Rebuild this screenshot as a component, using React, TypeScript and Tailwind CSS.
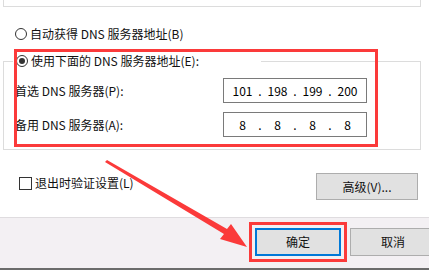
import React from 'react';

const font = "font-['Noto_Sans_CJK_SC',sans-serif]";

const Radio = ({ checked }: { checked?: boolean }) => (
  <span className="w-[12px] h-[12px] rounded-full border border-[#333] bg-white flex items-center justify-center shrink-0">
    {checked && <span className="w-[6px] h-[6px] rounded-full bg-[#333]" />}
  </span>
);

const IpField = ({ parts }: { parts: string[] }) => (
  <div className="w-[144px] h-[25px] border border-[#7a7a7a] bg-white flex items-center pl-[4px] text-[12px] leading-[16px] text-black">
    {parts.map((p, i) => (
      <React.Fragment key={i}>
        {i > 0 && <span className="w-[6px] text-center">.</span>}
        <span className="w-[29px] text-center">{p}</span>
      </React.Fragment>
    ))}
  </div>
);

const App: React.FC = () => {
  return (
    <div className={`relative w-[429px] h-[270px] bg-white overflow-hidden flex flex-col text-[12px] leading-[16px] text-[#111] ${font}`}>
      {/* tail of previous group box */}
      <div className="ml-[3px] w-[418px] h-[7px] border-l border-r border-b border-[#dcdcdc] shrink-0" />

      <div className="mt-[19px] h-[16px] pl-[15px] flex items-center gap-[3px] shrink-0">
        <Radio />
        <span>自动获得 DNS 服务器地址(B)</span>
      </div>

      {/* group box */}
      <div className="mt-[11px] ml-[3px] w-[418px] flex flex-col shrink-0">
        <div className="h-[16px] flex">
          <div className="w-[10px] h-[8px] self-end border-t border-l border-[#dcdcdc]" />
          <div className="w-[248px] pl-[3px] flex items-center gap-[3px]">
            <Radio checked />
            <span>使用下面的 DNS 服务器地址(E):</span>
          </div>
          <div className="flex-1 h-[8px] self-end border-t border-r border-[#dcdcdc]" />
        </div>
        <div className="border-l border-r border-b border-[#dcdcdc] pt-[9px] pb-[12px] flex flex-col gap-[9px]">
          <div className="h-[25px] flex items-center justify-between pl-[11px] pr-[53px]">
            <span>首选 DNS 服务器(P):</span>
            <IpField parts={['101', '198', '199', '200']} />
          </div>
          <div className="h-[25px] flex items-center justify-between pl-[11px] pr-[53px]">
            <span>备用 DNS 服务器(A):</span>
            <IpField parts={['8', '8', '8', '8']} />
          </div>
        </div>
      </div>

      <div className="mt-[23px] h-[27px] flex items-start justify-between pl-[19px] pr-[11px] shrink-0">
        <div className="mt-[2px] flex items-center gap-[3px]">
          <span className="w-[13px] h-[13px] border border-[#333] bg-white" />
          <span>退出时验证设置(L)</span>
        </div>
        <button className="w-[102px] h-[27px] bg-[#e1e1e1] border border-[#adadad] text-[#111]">高级(V)...</button>
      </div>

      {/* footer */}
      <div className="mt-[17px] flex-1 bg-[#f3f0f3] border-t border-[#dfdcdf] border-b-2 border-b-[#6b6b6b] flex items-start pt-[10px] pl-[255px] gap-[9px]">
        <button className="w-[86px] h-[28px] bg-[#e1e1e1] border-2 border-[#0078d7] text-[#111] shrink-0">确定</button>
        <button className="w-[86px] h-[28px] bg-[#e1e1e1] border border-[#adadad] text-[#111] shrink-0">取消</button>
      </div>

      {/* red annotations */}
      <div className="absolute left-[14px] top-[49px] w-[364px] h-[98px] border-[3px] border-[#fb3a3a] pointer-events-none" />
      <div className="absolute left-[249px] top-[222px] w-[98px] h-[40px] border-[3px] border-[#fb3a3a] pointer-events-none" />
      <svg className="absolute left-0 top-0 pointer-events-none" width="429" height="270" viewBox="0 0 429 270">
        <polygon points="105,162 107,160 227,229 231,224 247,247 220,239 224,234" fill="#fb3a3a" />
      </svg>
    </div>
  );
};

export default App;
